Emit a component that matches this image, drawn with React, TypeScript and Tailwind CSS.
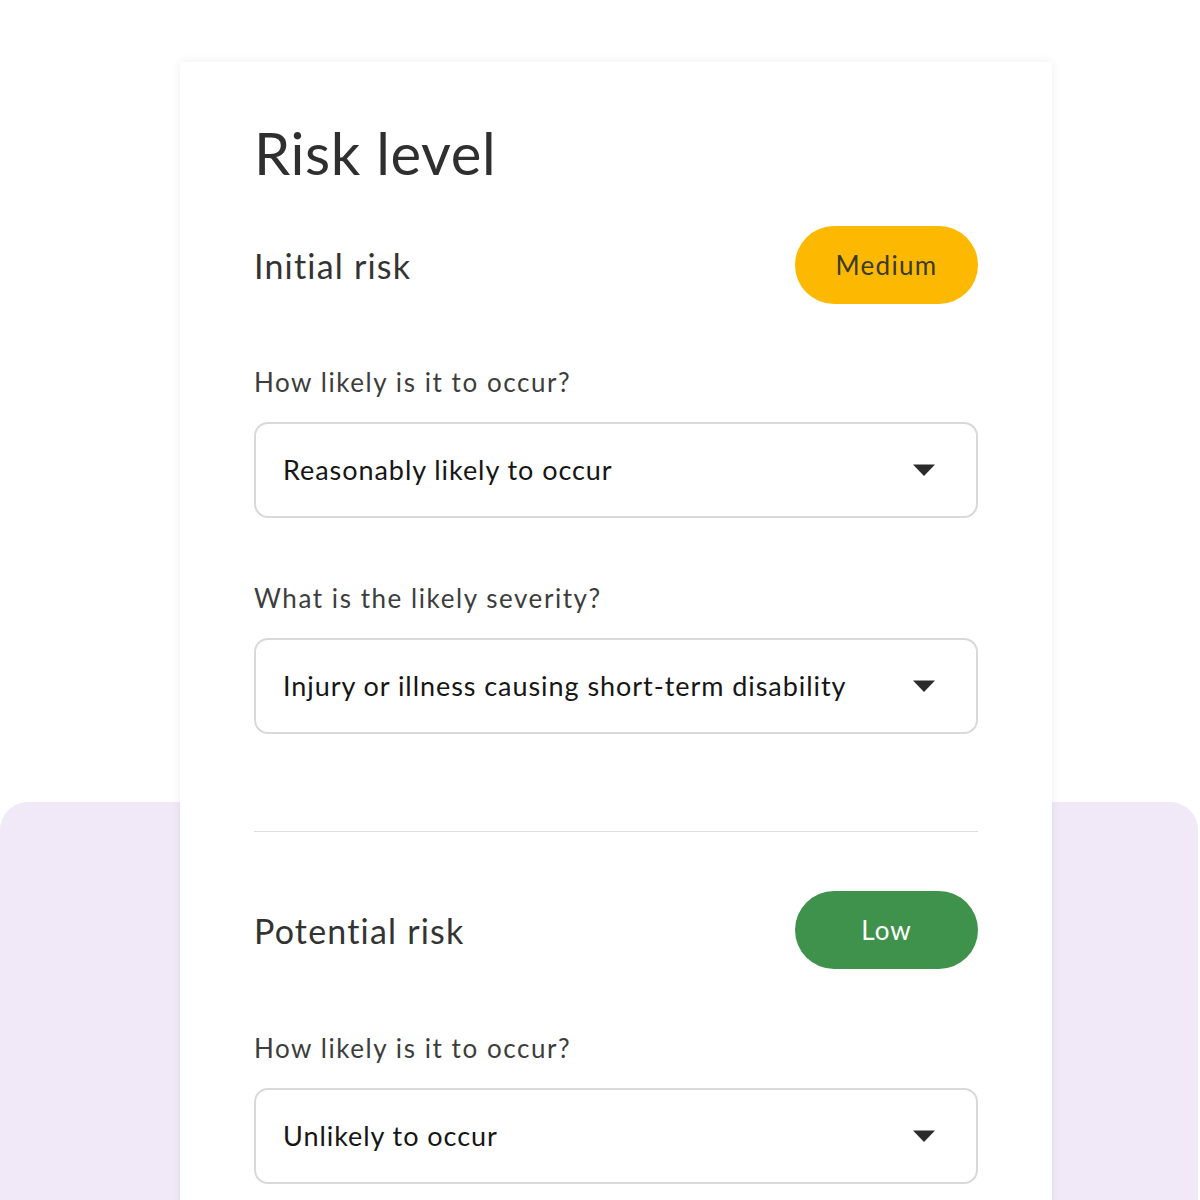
import { ReactNode } from 'react';

function Caret() {
  return (
    <svg width="24" height="14" viewBox="0 0 24 14" className="shrink-0">
      <path d="M1 1.5h22L12 13z" fill="#2b2b2b" />
    </svg>
  );
}

function Select({ value }: { value: string }) {
  return (
    <div className="flex h-[96px] items-center justify-between rounded-[14px] border-2 border-[#d9d9d9] bg-white pl-[27px] pr-[40px]">
      <span className="text-[27px] tracking-[0.035em] text-[#161616]">{value}</span>
      <Caret />
    </div>
  );
}

function Field({ label, value }: { label: string; value: string }) {
  return (
    <div className="flex flex-col">
      <label className="text-[26px] leading-[36px] tracking-[0.06em] text-[#3d3d3d]">{label}</label>
      <div className="mt-[22px]">
        <Select value={value} />
      </div>
    </div>
  );
}

function Section({ title, badge }: { title: string; badge: ReactNode }) {
  return (
    <div className="flex h-[78px] items-center justify-between">
      <h2 className="text-[34px] tracking-[0.035em] text-[#333]">{title}</h2>
      {badge}
    </div>
  );
}

export default function App() {
  return (
    <div
      className="relative h-[1200px] w-[1200px] overflow-hidden bg-white"
      style={{ fontFamily: 'Lato, "Open Sans", sans-serif' }}
    >
      {/* lavender backdrop */}
      <div className="absolute left-0 top-[802px] h-[500px] w-[1198px] rounded-[28px] bg-[#f1e8f8]" />

      <div className="relative ml-[180px] mt-[62px] h-[1200px] w-[872px] bg-white px-[74px] pt-[56px] shadow-[0_0_10px_rgba(0,0,0,0.07)]">
        <h1 className="text-[58px] leading-[70px] tracking-[0.01em] text-[#2f2f2f]">Risk level</h1>

        <div className="mt-[38px]">
          <Section
            title="Initial risk"
            badge={
              <span className="flex h-[78px] w-[183px] items-center justify-center rounded-full bg-[#fdb901] text-[26px] tracking-[0.05em] text-[#3a3a2a]">
                Medium
              </span>
            }
          />
        </div>

        <div className="mt-[60px] flex flex-col gap-[62px]">
          <Field label="How likely is it to occur?" value="Reasonably likely to occur" />
          <Field label="What is the likely severity?" value="Injury or illness causing short-term disability" />
        </div>

        <div className="mt-[97px] h-px bg-[#dddddd]" />

        <div className="mt-[59px]">
          <Section
            title="Potential risk"
            badge={
              <span className="flex h-[78px] w-[183px] items-center justify-center rounded-full bg-[#3f924b] text-[26px] tracking-[0.04em] text-white">
                Low
              </span>
            }
          />
        </div>

        <div className="mt-[61px]">
          <Field label="How likely is it to occur?" value="Unlikely to occur" />
        </div>
      </div>
    </div>
  );
}
